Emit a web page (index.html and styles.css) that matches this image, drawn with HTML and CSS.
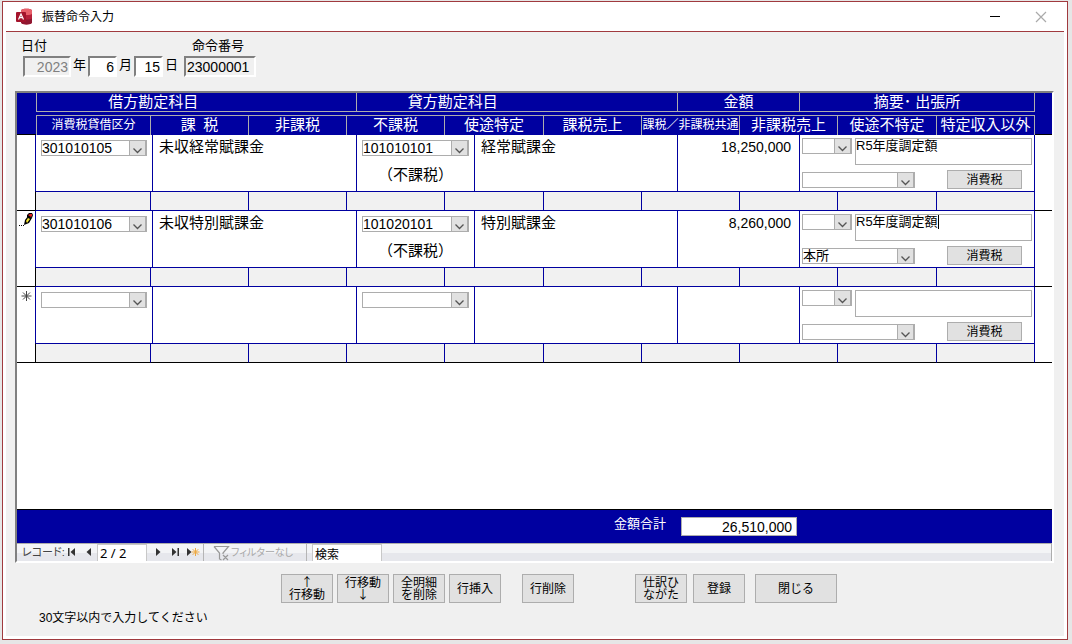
FILE: index.html
```html
<!DOCTYPE html>
<html lang="ja">
<head>
<meta charset="utf-8">
<title>振替命令入力</title>
<link rel="stylesheet" href="styles.css">
</head>
<body>
<svg class="defs" aria-hidden="true">
  <symbol id="arrow" viewBox="0 0 18 16"><path d="M0 0h18v16H0z" fill="#adadad"/><path d="M1 1h15v14H1z" fill="#e1e1e1"/><path d="M4.500 8.500l4 4 4-4" fill="none" stroke="#555" stroke-width="1.300"/></symbol>
</svg>
<main class="window">
  <header class="titlebar">
    <svg class="app-icon" viewBox="0 0 17 17" aria-hidden="true">
      <path d="M5 2.500C5 0 16 0 16 2.500v12c0 2.500-11 2.500-11 0z" fill="#b5203a"/>
      <path d="M5 2.500C5 0 16 0 16 2.500v3c0 2-11 2-11 0z" fill="#e8606a"/>
      <path d="M5 10c0 2 11 2 11 0v4.500c0 2.500-11 2.500-11 0z" fill="#8f1730"/>
      <rect x="0" y="4" width="10" height="10" rx="1" fill="#a4142c"/>
      <path d="M2.500 11.500L5 6l2.500 5.500M3.400 9.700h3.200" fill="none" stroke="#fff" stroke-width="1.200"/>
    </svg>
    <h1 class="title">振替命令入力</h1>
    <button class="caption-button" aria-label="最小化"><svg viewBox="0 0 12 12"><path d="M1 5.500h10" stroke="#000"/></svg></button>
    <button class="caption-button" aria-label="閉じる" disabled><svg viewBox="0 0 12 12"><path d="M1 1l10 10M11 1L1 11" stroke="#aaa" stroke-width="1.200"/></svg></button>
  </header>
  <div class="client">
    <section class="order">
      <fieldset class="field date-field">
        <legend class="caption">日付</legend>
        <div class="date-parts">
          <input class="sunken year" id="year" value="2023" disabled><label for="year">年</label>
          <input class="sunken part" id="month" value="6"><label for="month">月</label>
          <input class="sunken part" id="day" value="15"><label for="day">日</label>
        </div>
      </fieldset>
      <div class="field">
        <label class="caption number-caption" for="number">命令番号</label>
        <input class="sunken number" id="number" value="23000001" readonly>
      </div>
    </section>

    <section class="subform">
      <table class="ledger">
        <thead>
          <tr class="head-main">
            <td></td><th class="debit">借方勘定科目</th><th class="credit">貸方勘定科目</th><th>金額</th><th>摘要･ 出張所</th><td></td>
          </tr>
          <tr class="head-sub">
            <td></td><th class="small">消費税貸借区分</th><th>課&ensp;税</th><th>非課税</th><th>不課税</th><th>使途特定</th><th>課税売上</th><th class="small">課税／非課税共通</th><th>非課税売上</th><th>使途不特定</th><th>特定収入以外</th><td></td>
          </tr>
        </thead>
        <tbody>
          <tr class="record">
            <td class="selector"></td>
            <td class="account"><span class="combo"><select aria-label="借方科目コード"><option>301010105</option></select><svg><use href="#arrow"/></svg></span></td>
            <td class="name">未収経常賦課金</td>
            <td class="account"><span class="combo"><select aria-label="貸方科目コード"><option>101010101</option></select><svg><use href="#arrow"/></svg></span><span class="tax-kind">（不課税）</span></td>
            <td class="name">経常賦課金</td>
            <td class="amount">18,250,000</td>
            <td class="summary">
              <div class="summary-line"><span class="combo short"><select aria-label="摘要コード"><option></option></select><svg><use href="#arrow"/></svg></span><textarea class="memo" aria-label="摘要" rows="1">R5年度調定額</textarea></div>
              <div class="summary-line office"><span class="combo branch"><select aria-label="出張所"><option></option></select><svg><use href="#arrow"/></svg></span><button class="button tax">消費税</button></div>
            </td>
            <td class="rest"></td>
          </tr>
          <tr class="tax-row"><td></td><td></td><td></td><td></td><td></td><td></td><td></td><td></td><td></td><td></td><td></td><td></td></tr>
          <tr class="record">
            <td class="selector"><svg viewBox="0 0 14 14" aria-label="編集中"><path d="M0 12h1v1H0zM2 12h1v1H2zM4 12h1v1H4z"/><path d="M5 12l1-5 3-4 4 2-3 5z" fill="#000"/><path d="M7 8l2-3 2 1-3 4z" fill="#f4e430"/><path d="M8 2l2-2h3l1 2-1 3-5-1z" fill="#000"/><path d="M9 2l2-1h2v2l-1 1z" fill="#e02020"/></svg></td>
            <td class="account"><span class="combo"><select aria-label="借方科目コード"><option>301010106</option></select><svg><use href="#arrow"/></svg></span></td>
            <td class="name">未収特別賦課金</td>
            <td class="account"><span class="combo"><select aria-label="貸方科目コード"><option>101020101</option></select><svg><use href="#arrow"/></svg></span><span class="tax-kind">（不課税）</span></td>
            <td class="name">特別賦課金</td>
            <td class="amount">8,260,000</td>
            <td class="summary">
              <div class="summary-line"><span class="combo short"><select aria-label="摘要コード"><option></option></select><svg><use href="#arrow"/></svg></span><div class="memo" role="textbox" contenteditable="true" aria-label="摘要"><span class="caret">R5年度調定額</span></div></div>
              <div class="summary-line office"><span class="combo branch"><select aria-label="出張所"><option>本所</option></select><svg><use href="#arrow"/></svg></span><button class="button tax">消費税</button></div>
            </td>
            <td class="rest"></td>
          </tr>
          <tr class="tax-row"><td></td><td></td><td></td><td></td><td></td><td></td><td></td><td></td><td></td><td></td><td></td><td></td></tr>
          <tr class="record">
            <td class="selector"><svg viewBox="0 0 14 14" aria-label="新規"><path d="M7.500 2v10M2.500 7h10M4 3.500l7 7M11 3.500l-7 7" stroke="#444" fill="none"/></svg></td>
            <td class="account"><span class="combo"><select aria-label="借方科目コード"><option></option></select><svg><use href="#arrow"/></svg></span></td>
            <td class="name"></td>
            <td class="account"><span class="combo"><select aria-label="貸方科目コード"><option></option></select><svg><use href="#arrow"/></svg></span></td>
            <td class="name"></td>
            <td class="amount"></td>
            <td class="summary">
              <div class="summary-line"><span class="combo short"><select aria-label="摘要コード"><option></option></select><svg><use href="#arrow"/></svg></span><textarea class="memo" aria-label="摘要" rows="1"></textarea></div>
              <div class="summary-line office"><span class="combo branch"><select aria-label="出張所"><option></option></select><svg><use href="#arrow"/></svg></span><button class="button tax">消費税</button></div>
            </td>
            <td class="rest"></td>
          </tr>
          <tr class="tax-row last"><td></td><td></td><td></td><td></td><td></td><td></td><td></td><td></td><td></td><td></td><td></td><td></td></tr>
        </tbody>
      </table>
      <div class="total-bar">
        <label class="total-label" for="total">金額合計</label>
        <input class="total" id="total" value="26,510,000" readonly>
      </div>
      <nav class="navigator">
        <label class="nav-label" for="position">レコード:</label>
        <button class="nav-button first" aria-label="先頭"><svg viewBox="0 0 10 10"><path d="M1 1h1.500v8H1zM8 1v8L3.500 5z"/></svg></button>
        <button class="nav-button" aria-label="前"><svg viewBox="0 0 10 10"><path d="M7 1v8L2.500 5z"/></svg></button>
        <input class="nav-input position" id="position" value="2 / 2">
        <button class="nav-button" aria-label="次"><svg viewBox="0 0 10 10"><path d="M3 1v8l4.500-4z"/></svg></button>
        <button class="nav-button" aria-label="最終"><svg viewBox="0 0 10 10"><path d="M2 1v8l4.500-4zM7.500 1H9v8H7.500z"/></svg></button>
        <button class="nav-button add" aria-label="新規"><svg viewBox="0 0 14 10"><path d="M1 1v8l4.500-4z"/><path d="M9.500 1v8M5.500 5h8M6.700 2.200l5.600 5.600M12.300 2.200L6.700 7.800" stroke="#eda840"/></svg></button>
        <button class="filter" disabled><svg viewBox="0 0 17 16"><path d="M1 1.500h14.500L10 8v1M1 1.500L6.500 8v6l2 1M10 10l5 5M15 10l-5 5" fill="none" stroke="#999" stroke-width="1.200"/></svg>フィルターなし</button>
        <input class="nav-input search" aria-label="検索" value="検索">
      </nav>
    </section>

    <footer class="actions">
      <button class="button action">↑<br>行移動</button>
      <button class="button action">行移動<br>↓</button>
      <button class="button action">全明細<br>を削除</button>
      <button class="button action">行挿入</button>
      <button class="button action remove">行削除</button>
      <button class="button action template">仕訳ひ<br>ながた</button>
      <button class="button action save">登録</button>
      <button class="button action close">閉じる</button>
    </footer>
    <p class="hint">30文字以内で入力してください</p>
  </div>
</main>
</body>
</html>
```
FILE: styles.css
```css
:root {
  --navy: #0000a0;
  --line: #adadad;
  --face: #f0f0f0;
  --maroon: #a03a3e;
}

* { box-sizing: border-box; }

body {
  margin: 0;
  padding: 1px 4px 4px 2px;
  background: #e6e6e6;
  color: #000;
  font: 12px/16px "Liberation Sans", "Noto Sans CJK JP", sans-serif;
}

input, select, textarea, button { font: inherit; color: inherit; margin: 0; border-radius: 0; }

.defs { display: none; }

.window {
  display: flex;
  flex-direction: column;
  min-height: calc(100vh - 5px);
  padding: 0 3px 3px;
  border: 1px solid var(--maroon);
  background: #fff;
}

.titlebar { display: flex; align-items: center; height: 29px; padding-left: 10px; }
.app-icon { width: 17px; height: 17px; }
.title { flex: 1; margin: 0 0 0 9px; font-size: 12px; font-weight: 400; }
.caption-button { width: 46px; height: 28px; padding: 0; border: 0; background: none; }
.caption-button svg { display: block; width: 12px; height: 12px; margin: auto; }

.client {
  flex: 1;
  display: flex;
  flex-direction: column;
  padding: 6px 10px 9px 9px;
  border-top: 1px solid var(--maroon);
  background: var(--face);
}

/* Order header */
.order { display: flex; gap: 5px; padding-left: 6px; font-size: 13px; }
.field { display: flex; flex-direction: column; margin: 0; padding: 0; border: 0; }
.caption { padding: 0; line-height: 16px; height: 18px; }
.number-caption { padding-left: 8px; }
.date-parts { display: flex; gap: 1px; padding-left: 2px; line-height: 18px; }
.date-parts label { width: 15px; text-align: center; }
.sunken {
  height: 21px;
  padding: 0 3px;
  border: 2px solid;
  border-color: #808080 #fff #fff #808080;
  background: #fff;
  font-size: 14px;
}
.year { width: 48px; padding: 0 1px; background: var(--face); color: #808080; text-align: right; }
.part { width: 29px; padding: 0 1px; text-align: right; }
.number { width: 72px; padding: 0 1px; background: var(--face); }

/* Journal lines */
.subform {
  flex: 1;
  display: flex;
  flex-direction: column;
  margin-top: 14px;
  border: 2px solid;
  border-color: #808080 #fff #fff #808080;
  background: #fff;
}
.ledger { display: block; margin-bottom: auto; }
.ledger thead, .ledger tbody { display: block; }
.ledger tr { display: grid; }
.ledger td, .ledger th { display: block; min-width: 0; padding: 0; }
.ledger thead { background: var(--navy); color: #fff; }
.ledger th {
  border-left: 1px solid var(--line);
  font-size: 15px;
  font-weight: 400;
  line-height: 18px;
  white-space: nowrap;
  text-align: center;
  overflow: hidden;
}
.ledger th:nth-last-child(2) { border-right: 1px solid var(--line); }
.ledger th.small { font-size: 12px; }
.ledger th.debit { padding-right: 27%; }
.ledger th.credit { padding-right: 40%; }
.head-main {
  grid-template-columns: 19px 320fr 321fr 122fr 236fr 17px;
  height: 22px;
}
.head-main th { height: 19px; border-bottom: 1px solid var(--line); }
.head-sub {
  grid-template-columns: 19px 114fr 98fr 98fr 98fr 99fr 98fr 98fr 98fr 99fr 99fr 17px;
  height: 20px;
}
.head-sub th { border-top: 1px solid var(--line); }
.head-sub td { border-bottom: 1px solid #000; }

.record {
  grid-template-columns: 18px 117fr 204fr 118fr 203fr 122fr 235fr 18px;
  height: 56px;
}
.record td + td { border-left: 1px solid var(--navy); }
.selector svg { display: block; width: 14px; height: 14px; margin: 2px auto; }
.ledger .account { padding: 5px 5px 0; }
.ledger .name { padding: 3px 6px; font-size: 15px; line-height: 18px; white-space: nowrap; }
.ledger .amount { padding: 4px 8px; font-size: 14px; text-align: right; }
.ledger .summary { padding: 3px 2px 0; }
.tax-kind { display: block; margin-top: 10px; font-size: 15px; line-height: 18px; text-align: center; white-space: nowrap; }

.tax-row {
  grid-template-columns: 18px 115fr 98fr 98fr 98fr 99fr 98fr 98fr 98fr 99fr 98fr 18px;
  height: 20px;
}
.ledger .tax-row td {
  border: solid var(--navy);
  border-width: 1px 0 1px 1px;
  background: #f1f1f1;
}
.ledger .tax-row td:first-child { border-width: 0 0 1px; border-color: #000; background: #fff; }
.ledger .tax-row td:nth-child(2) { border-left-color: #000; }
.ledger .tax-row td:last-child { border-top: 0; border-bottom-color: #000; background: #fff; }
.ledger .tax-row.last td { border-bottom-color: #000; }

.combo { display: grid; width: 107px; max-width: 100%; height: 16px; }
.combo select, .combo svg { grid-area: 1 / 1; }
.combo select {
  width: 100%;
  height: 16px;
  padding: 0 18px 0 0;
  border: 1px solid var(--line);
  background: #fff;
  appearance: none;
  font-size: 14px;
  line-height: 14px;
}
.combo svg { justify-self: end; width: 18px; height: 16px; pointer-events: none; }
.combo.short { flex: none; width: 50px; }
.combo.branch { width: 113px; }
.combo.branch select { font-size: 13px; }
.summary-line { display: flex; gap: 3px; }
.office { justify-content: space-between; margin-top: 5px; padding-right: 10px; }
.office .combo { align-self: center; }
.memo {
  flex: 1;
  min-width: 0;
  height: 27px;
  padding: 0;
  border: 1px solid var(--line);
  background: #fff;
  font-size: 13px;
  line-height: 14px;
  resize: none;
  overflow: hidden;
}
.caret { border-right: 1px solid #000; }

.button {
  padding: 0 0 2px;
  border: 1px solid var(--line);
  background: #e1e1e1;
  font-family: "Noto Sans CJK JP", sans-serif;
  font-size: 12px;
  line-height: 12px;
  white-space: nowrap;
}
.tax { width: 75px; height: 19px; }

/* Total and record navigator */
.total-bar {
  display: grid;
  grid-template-columns: 18px 642fr 122fr 235fr 18px;
  height: 34px;
  border-top: 1px solid #000;
  background: var(--navy);
  color: #fff;
}
.total-label { grid-column: 2; justify-self: end; padding: 6px 11px; font-size: 13px; }
.total {
  width: 116px;
  height: 19px;
  margin: 7px 0 0 4px;
  padding: 0 4px;
  border: 1px solid var(--line);
  background: #fff;
  color: #000;
  font-size: 14px;
  text-align: right;
}
.navigator {
  display: flex;
  height: 18px;
  padding-left: 5px;
  border: solid var(--line);
  border-width: 1px 1px 0 0;
  background: linear-gradient(#f3f4f6 9px, #e6e7ec 9px);
  color: #444;
}
.nav-label { width: 40px; font-size: 11px; font-feature-settings: "palt"; white-space: nowrap; }
.nav-button { width: 17px; height: 16px; padding: 0; border: 0; background: none; }
.nav-button svg { display: block; width: 10px; height: 10px; margin: auto; fill: #333; }
.first { margin-left: 1px; }
.nav-button.add { width: 20px; }
.nav-button.add svg { width: 14px; }
.nav-input { height: 17px; padding: 0 2px; border: 1px solid #c8c8c8; border-bottom: 0; background: #fff; color: #000; font-size: 12px; }
.position { width: 50px; margin-right: 2px; font-family: "Noto Sans", sans-serif; font-size: 13px; }
.filter {
  display: flex;
  align-items: center;
  gap: 1px;
  width: 104px;
  padding: 0 0 0 9px;
  border: solid #b5b5b5;
  border-width: 0 1px;
  background: none;
  color: #a8a8a8;
  font-size: 10px;
  font-feature-settings: "palt";
  white-space: nowrap;
}
.filter svg { flex: none; width: 17px; height: 16px; }
.search { width: 70px; margin-left: 5px; }

/* Form commands */
.actions { display: flex; gap: 4px; padding: 11px 0 0 266px; }
.action { width: 52px; height: 29px; }
.remove { margin-left: 17px; }
.template { margin-left: 57px; }
.save { margin-left: 2px; }
.close { width: 82px; margin-left: 6px; }
.hint { margin: 6px 0 0 24px; line-height: 18px; }
```
